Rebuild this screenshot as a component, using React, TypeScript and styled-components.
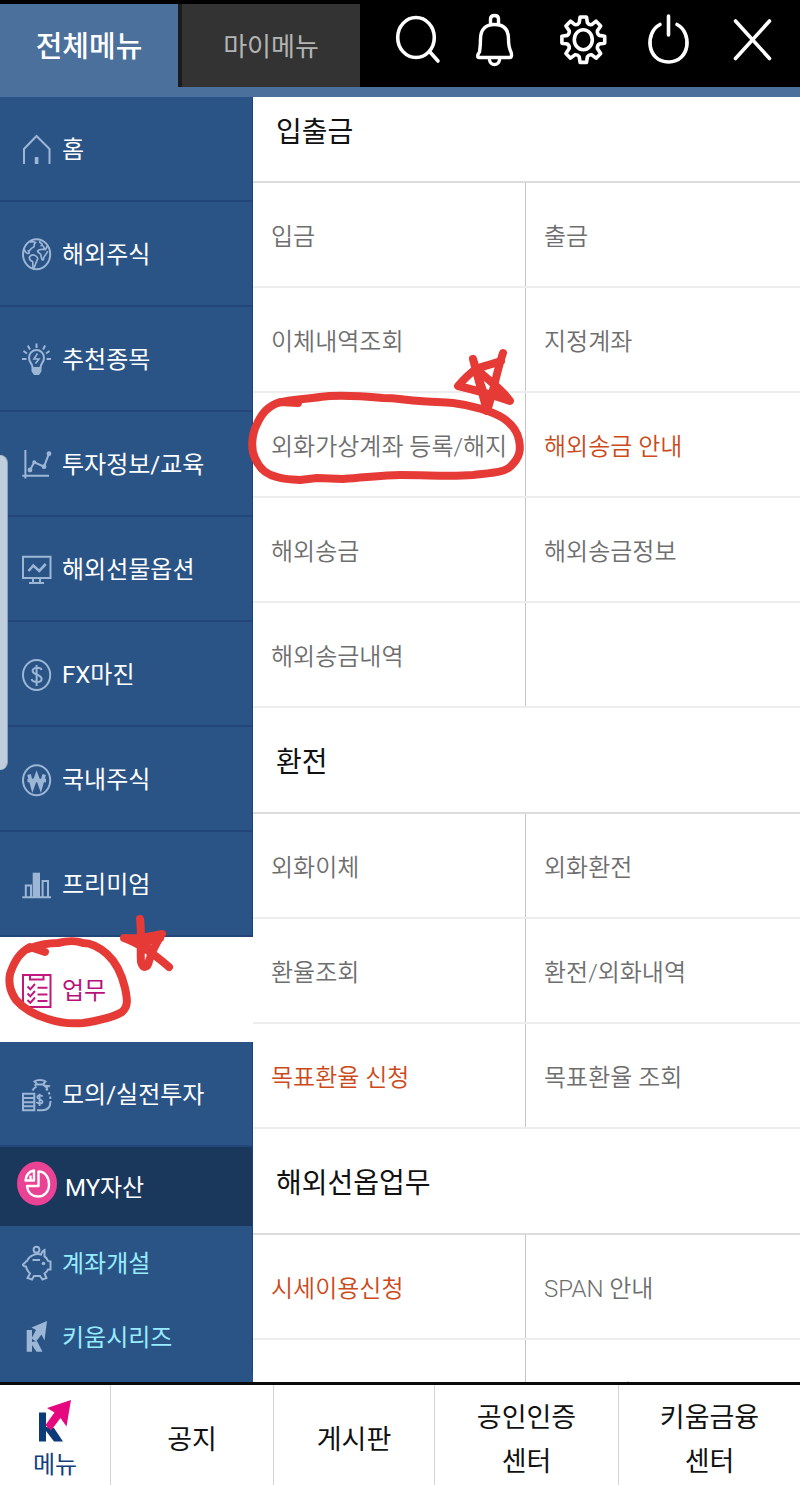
import React from "react";
import styled, { createGlobalStyle } from "styled-components";

const GlobalStyle = createGlobalStyle`
  *, *::before, *::after { box-sizing: border-box; }
  body {
    margin: 0;
    background: #fff;
    font-family: Roboto, "Noto Sans CJK KR", sans-serif;
  }
  a { color: inherit; text-decoration: none; }
  button { font: inherit; border: 0; padding: 0; background: none; cursor: pointer; }
`;

const Screen = styled.div`
  display: flex;
  flex-direction: column;
  height: 100vh;
  overflow: hidden;
`;

/* ---------- header ---------- */

const Header = styled.header`
  display: grid;
  grid-template-columns: 178fr 182fr 440fr;
  height: 97px;
  padding-top: 4px;
  background: #000;
  border-bottom: 10px solid #4b709c;
`;

const Tab = styled.button<{ $active?: boolean }>`
  padding-top: 2px;
  color: ${(p) => (p.$active ? "#fff" : "#b4b4b4")};
  background: ${(p) => (p.$active ? "#4b709c" : "#333")};
  border-left: ${(p) => (p.$active ? "0" : "4px solid #1c1c1c")};
  font-size: ${(p) => (p.$active ? "29px" : "26px")};
  font-weight: ${(p) => (p.$active ? 500 : 400)};
  line-height: 36px;
`;

const Actions = styled.div`
  display: grid;
  grid-template-columns: 76fr 82fr 88fr 84fr 84fr;
  align-items: start;
  padding: 4px 6px 0 20px;
`;

const Action = styled.button`
  display: flex;
  justify-content: center;
  color: #fff;
`;

const ActionIcon = styled.svg`
  width: 64px;
  height: 64px;
  fill: none;
  stroke: currentColor;
  stroke-width: 3.6;
  stroke-linecap: round;
  stroke-linejoin: round;
`;

/* ---------- main area ---------- */

const Main = styled.main`
  position: relative;
  display: grid;
  grid-template-columns: 253px 1fr;
  flex: 1;
  min-height: 0;
`;

const Sidebar = styled.nav`
  min-height: 0;
  overflow: hidden;
  background: #2b5486;
`;

type Tone = "normal" | "active" | "asset" | "extra";

const toneHeight: Record<Tone, string> = { normal: "105px", active: "105px", asset: "79px", extra: "74px" };
const toneColor: Record<Tone, string> = { normal: "#fff", active: "#b8107a", asset: "#fff", extra: "#98ecff" };
const toneFill: Record<Tone, string> = {
  normal: "transparent",
  active: "#fff",
  asset: "#1a375c",
  extra: "transparent",
};

const SideItem = styled.a<{ $tone: Tone }>`
  display: flex;
  align-items: center;
  gap: 8px;
  height: ${(p) => toneHeight[p.$tone]};
  padding-left: ${(p) => (p.$tone === "asset" ? "17px" : "20px")};
  border-bottom: ${(p) => (p.$tone === "normal" ? "2px solid #22457a" : "0")};
  border-right: ${(p) => (p.$tone === "active" ? "0" : "1px solid #1c437a")};
  color: ${(p) => toneColor[p.$tone]};
  background: ${(p) => toneFill[p.$tone]};
  font-size: 24px;
  line-height: 32px;
`;

const SideLabel = styled.span`
  padding-top: 2px;
`;

const SideIcon = styled.svg<{ $accent?: boolean }>`
  flex: none;
  width: 34px;
  height: 34px;
  overflow: visible;
  fill: none;
  color: ${(p) => (p.$accent ? "#c0187f" : "#9cb6d6")};
  stroke: currentColor;
  stroke-width: 2;
`;

const AssetIcon = styled.svg`
  flex: none;
  width: 40px;
  height: 52px;
  fill: none;
`;

const Content = styled.div`
  min-height: 0;
  overflow: hidden auto;
  scrollbar-width: none;
`;

const Section = styled.section`
  background: #fff;
`;

const SectionTitle = styled.h2<{ $first?: boolean }>`
  display: flex;
  align-items: center;
  height: ${(p) => (p.$first ? "86px" : "106px")};
  margin: 0;
  padding: ${(p) => (p.$first ? "0 23px 12px" : "6px 23px 0")};
  border-bottom: 2px solid #dcdcdc;
  color: #111;
  font-size: 28px;
  font-weight: 400;
  line-height: 36px;
`;

const Grid = styled.ul`
  display: grid;
  grid-template-columns: 273fr 274fr;
  margin: 0;
  padding: 0;
  list-style: none;
`;

const Cell = styled.li`
  display: flex;
  height: 105px;
  border-bottom: 2px solid #ededed;

  &:nth-child(odd) > * {
    border-right: 1px solid #c4c4c4;
  }
`;

const CellLink = styled.a<{ $accent?: boolean }>`
  display: flex;
  align-items: center;
  flex: 1;
  padding: 4px 0 0 18px;
  color: ${(p) => (p.$accent ? "#cc4a1a" : "#6e6e6e")};
  font-size: 24px;
  font-weight: 350;
  line-height: 32px;
  white-space: nowrap;
`;

const ScrollHandle = styled.div`
  position: absolute;
  left: 0;
  top: 358px;
  width: 8px;
  height: 315px;
  border-right: 1px solid #8fa3ba;
  border-radius: 0 8px 8px 0;
  background: #c0cddc;
`;

const Markup = styled.svg`
  position: absolute;
  left: 0;
  top: 0;
  width: 560px;
  height: 960px;
  pointer-events: none;
  fill: none;
  stroke: #e53a36;
  stroke-width: 8;
  stroke-linecap: round;
  stroke-linejoin: round;
`;

/* ---------- bottom bar ---------- */

const BottomBar = styled.nav`
  display: grid;
  grid-template-columns: 111fr 163fr 161fr 184fr 181fr;
  height: 103px;
  border-top: 3px solid #0a0a0a;
  background: #fff;
`;

const BottomLink = styled.a<{ $brand?: boolean }>`
  display: flex;
  flex-direction: column;
  align-items: center;
  justify-content: center;
  gap: ${(p) => (p.$brand ? "6px" : "0")};
  padding-top: 10px;
  border-right: 1px solid #d4d4d4;
  color: ${(p) => (p.$brand ? "#12407c" : "#111")};
  font-size: ${(p) => (p.$brand ? "24px" : "27px")};
  line-height: ${(p) => (p.$brand ? "32px" : "44px")};
  text-align: center;

  &:last-child { border-right: 0; }
`;

const BrandMark = styled.svg`
  width: 34px;
  height: 44px;
`;

/* ---------- drawings ---------- */

const DollarStrokes = () => (
  <path d="M5 -5 C4 -8 -4 -8 -4 -4 C-4 0 5 -1 5 4 C5 8 -4 8 -5 4 M0 -10 V11" />
);

const icons: Record<string, React.ReactNode> = {
  home: (
    <>
      <path d="M4 32 V17 L16.5 4 L29.5 17 V32" />
      <path strokeWidth="3.6" d="M16.6 25 V32" />
    </>
  ),
  globe: (
    <>
      <ellipse cx="16.6" cy="17.3" rx="13.6" ry="15" />
      <path
        strokeWidth="1.7"
        d="M9.5 4.5 C11 6 13.5 3.5 15.5 5.5 C12.5 7.5 16 9 13 10.5 C10.5 11 10.5 13.5 8.5 14 C10.5 16.5 7.5 17.5 5.5 15 L4 12 M20 4 C18.5 6.5 24 6 21.5 8.5 C25.5 9 22.5 11 25.5 12.5 L27.5 9 M25.5 12.5 C22 12.5 19.5 11.5 17.5 14 C18 17 21.5 15.5 21 19 C21.5 22 22.5 24 23.5 22.5 C23 18.5 27 18 27.5 14 M9.5 20 C11 17 14.5 17.5 16.5 19.5 C19.5 22.5 16.5 22 16.5 25 C15 27 15.5 29 13.5 31.5 C12 28.5 13.5 26 12.5 24.5 C10 23.5 9 22 9.5 20Z"
      />
    </>
  ),
  bulb: (
    <>
      <path d="M12.5 25.5 C12.5 21.5 9 20.5 9 15.5 A7.5 7.5 0 0 1 24 15.5 C24 20.5 20.5 21.5 20.5 25.5" />
      <path d="M12.5 26 H20.5 V29 L18.5 32 H14.5 L12.5 29Z" fill="currentColor" />
      <path strokeWidth="1.6" d="M17.500 11.500 L14 17 H19 L15.500 21.500" />
      <path d="M16.5 1.5 V6 M7.800 3.5 L10 7.5 M25.200 3.5 L23 7.5 M3.5 9 L7 11.5 M29.5 9 L26 11.5 M2 17 H6.5 M26.5 17 H31" />
    </>
  ),
  chart: (
    <>
      <path d="M5.4 3 V31.5 M2.3 28.7 H29" />
      <path d="M10 23 L14.3 15.3 L24 19.7 L29 6.7" />
      <g fill="currentColor" stroke="none">
        <circle cx="10" cy="23" r="2.4" />
        <circle cx="14.3" cy="15.3" r="2" />
        <circle cx="24" cy="19.7" r="2.4" />
        <circle cx="29" cy="6.7" r="2.4" />
      </g>
    </>
  ),
  monitor: (
    <>
      <path d="M3 4.8 H30.5 V26 H3Z M13 26 V30.5 M20 26 V30.5 M9 31 H24" />
      <path strokeWidth="2.6" d="M8.5 19 L13.3 13.5 L19.3 19 L25.7 12" />
    </>
  ),
  dollar: (
    <>
      <ellipse cx="16.6" cy="18" rx="13.6" ry="15" />
      <g transform="translate(16.6 18)">
        <DollarStrokes />
      </g>
    </>
  ),
  won: (
    <>
      <ellipse cx="16.6" cy="18.3" rx="13.6" ry="15" />
      <path strokeWidth="3.6" d="M9 12.5 L12.5 25 L16.6 13.5 L20.7 25 L24.2 12.5" />
      <path strokeWidth="3.6" d="M7.5 18.5 H26" />
    </>
  ),
  bars: (
    <>
      <path d="M2.3 30.2 H31 M5.8 30 V18.5 H11 V30 M22.6 30 V14 H28 V30" />
      <path fill="currentColor" stroke="none" d="M12.7 5.7 H20 V30 H12.7Z" />
    </>
  ),
  clipboard: (
    <>
      <path d="M3 2 H30.5 V34 H3Z M10 2 V6.5 H23.5 V2" />
      <path d="M7.5 13.5 L10.3 16.3 L15 11 M7.5 20.5 L10.3 23.3 L15 18 M7.5 27 L10.3 29.8 L15 24.5 M17.5 14.8 H27.5 M17.5 21.5 H27.5 M17.5 28 H27.5" />
    </>
  ),
  moneybag: (
    <>
      <path d="M3 16.8 H14.3 V33.3 H3Z M3 21 H14.3 M3 25.2 H14.3 M3 29.3 H14.3" />
      <path d="M14.5 8.5 L17 7 L14.5 4.5 C17 2.5 23 2.5 25.5 4.5 L23 7.5 H16.5 M12.5 13.5 C13.5 11.5 15 10.5 16.5 9.5 M23.5 8 C25.5 10 29 8.5 30 9.5 M24 8.5 L28 11.5" />
      <path strokeDasharray="2.5 2" d="M26 11.5 C30 16 30.5 20 30.5 24" />
      <path d="M30.5 24 C30.5 31 27 33.3 22 33.3 H17" />
      <g transform="translate(19.6 22.5) scale(0.58)" strokeWidth="3">
        <DollarStrokes />
      </g>
    </>
  ),
  piggy: (
    <>
      <circle cx="16.5" cy="3.7" r="2.9" />
      <path d="M21 8.5 C16 7 9 9.5 7 15 C5.5 15.5 5.5 16.5 3 18.5 C3 20 5 20.5 6 20.5 C6.5 23.5 8 25.5 10 27.5 L7.5 32 L12 33.5 L14 30 H20 L22.5 33.5 L26.5 32 L24.5 27.5 C26.5 26 27.5 25 28 23.5 H30.5 V15.5 L28 15 C27 12.5 25.5 11 24.5 10.5 L24.5 4 C22.5 5 21.5 6.5 21 8.5Z M12.5 14 H20" />
      <circle cx="23.5" cy="17.5" r="1.8" fill="currentColor" stroke="none" />
    </>
  ),
  series: (
    <g fill="currentColor" stroke="none">
      <path d="M6.700 10 H12 V22 L17 21 L22.500 31.700 H16.500 L12 25 V31.700 H6.700Z" />
      <path d="M27 1 L11.5 7.5 L16 10 L11.5 18.500 L16 21.5 L21.500 14.500 L24.5 20.5Z" />
    </g>
  ),
};

const sideItems: { label: string; icon: string; tone: Tone }[] = [
  { label: "홈", icon: "home", tone: "normal" },
  { label: "해외주식", icon: "globe", tone: "normal" },
  { label: "추천종목", icon: "bulb", tone: "normal" },
  { label: "투자정보/교육", icon: "chart", tone: "normal" },
  { label: "해외선물옵션", icon: "monitor", tone: "normal" },
  { label: "FX마진", icon: "dollar", tone: "normal" },
  { label: "국내주식", icon: "won", tone: "normal" },
  { label: "프리미엄", icon: "bars", tone: "normal" },
  { label: "업무", icon: "clipboard", tone: "active" },
  { label: "모의/실전투자", icon: "moneybag", tone: "normal" },
  { label: "MY자산", icon: "asset", tone: "asset" },
  { label: "계좌개설", icon: "piggy", tone: "extra" },
  { label: "키움시리즈", icon: "series", tone: "extra" },
];

type Entry = { label: string; accent?: boolean };

const sections: { title: string; entries: Entry[] }[] = [
  {
    title: "입출금",
    entries: [
      { label: "입금" },
      { label: "출금" },
      { label: "이체내역조회" },
      { label: "지정계좌" },
      { label: "외화가상계좌 등록/해지" },
      { label: "해외송금 안내", accent: true },
      { label: "해외송금" },
      { label: "해외송금정보" },
      { label: "해외송금내역" },
      { label: "" },
    ],
  },
  {
    title: "환전",
    entries: [
      { label: "외화이체" },
      { label: "외화환전" },
      { label: "환율조회" },
      { label: "환전/외화내역" },
      { label: "목표환율 신청", accent: true },
      { label: "목표환율 조회" },
    ],
  },
  {
    title: "해외선옵업무",
    entries: [
      { label: "시세이용신청", accent: true },
      { label: "SPAN 안내" },
      { label: "SPAN 위탁증거" },
      { label: "위험고지" },
    ],
  },
];

function gearPath(cx: number, cy: number) {
  const teeth = 8;
  const point = (r: number, angle: number) =>
    `${(cx + r * 0.94 * Math.cos(angle)).toFixed(1)} ${(cy + r * Math.sin(angle)).toFixed(1)}`;
  const parts: string[] = [];
  for (let i = 0; i < teeth; i++) {
    const a = (i * 2 * Math.PI) / teeth - Math.PI / 2;
    parts.push(
      `${point(17.5, a - 0.25)} L${point(23, a - 0.15)} L${point(23, a + 0.15)} L${point(17.5, a + 0.25)} Q${point(15.8, a + 0.39)}`
    );
  }
  return `M${parts.join(" ")} ${point(17.5, -Math.PI / 2 - 0.25)}Z`;
}

const actions: { label: string; drawing: React.ReactNode }[] = [
  {
    label: "검색",
    drawing: (
      <>
        <ellipse cx="30" cy="29.5" rx="18.3" ry="20" />
        <path d="M43.5 43.5 L52 53" />
      </>
    ),
  },
  {
    label: "알림",
    drawing: (
      <path
        strokeWidth="3.4"
        d="M25.5 16 V11 Q25.5 7.5 29.5 7.5 Q33.5 7.5 33.5 11 V16 M14.5 44 C15 40 15.5 38 15.5 31 C15.5 21 21 16.5 29.5 16.5 C38 16.5 43.5 21 43.5 31 C43.5 38 44 40 46 44 C47 47 46.5 49.5 45 49.5 H14 C12.5 49.5 12 47 14.5 44Z M24.5 52 Q25.5 56.5 29.5 56.5 Q33.5 56.5 34.5 52"
      />
    ),
  },
  {
    label: "설정",
    drawing: (
      <>
        <path d={gearPath(33.3, 31.7)} />
        <ellipse cx="33.3" cy="31.7" rx="9" ry="10" />
      </>
    ),
  },
  {
    label: "로그아웃",
    drawing: <path d="M32.5 8 V27 M24 16.5 C9 24 10 53.5 32.5 54 C55 53.5 56 24 41 16.5" />,
  },
  { label: "닫기", drawing: <path d="M15.5 13 L49.5 50.5 M49.5 13 L15.5 50.5" /> },
];

const bottomItems = [["공지"], ["게시판"], ["공인인증", "센터"], ["키움금융", "센터"]];

export default function App() {
  return (
    <Screen>
      <GlobalStyle />
      <Header>
        <Tab $active>전체메뉴</Tab>
        <Tab>마이메뉴</Tab>
        <Actions>
          {actions.map((a) => (
            <Action key={a.label} aria-label={a.label}>
              <ActionIcon viewBox="0 0 64 64">{a.drawing}</ActionIcon>
            </Action>
          ))}
        </Actions>
      </Header>

      <Main>
        <Sidebar>
          {sideItems.map((item) => (
            <SideItem key={item.label} href="#" $tone={item.tone}>
              {item.tone === "asset" ? (
                <AssetIcon viewBox="0 0 40 52">
                  <ellipse cx="20" cy="22.5" rx="20" ry="22" fill="#ea4395" />
                  <path
                    d="M21.5 10.5 C28 10.5 32 16 32 23.5 C32 31 27 35.5 21 35.5 C14.5 35.5 10.5 31 10 25 H21.5Z M17 9.5 V19.5 H8.5 C9 14 12 10.5 17 9.5Z M13.5 14.5 V19"
                    stroke="#fff"
                    strokeWidth="2.4"
                    strokeLinejoin="round"
                  />
                </AssetIcon>
              ) : (
                <SideIcon viewBox="0 0 34 34" $accent={item.tone === "active"}>
                  {icons[item.icon]}
                </SideIcon>
              )}
              <SideLabel>{item.label}</SideLabel>
            </SideItem>
          ))}
        </Sidebar>

        <Content>
          {sections.map((s, i) => (
            <Section key={s.title}>
              <SectionTitle $first={i === 0}>{s.title}</SectionTitle>
              <Grid>
                {s.entries.map((e, n) => (
                  <Cell key={n}>
                    {e.label && (
                      <CellLink href="#" $accent={e.accent}>
                        {e.label}
                      </CellLink>
                    )}
                  </Cell>
                ))}
              </Grid>
            </Section>
          ))}
        </Content>

        <ScrollHandle />
        <Markup viewBox="0 97 560 960" aria-hidden="true">
          <path d="M298 403 L280 402 C268 406 262 413 257 424 C251 436 251 450 255 458 C259 468 267 475 277 477 C286 480 292 479 300 480 L317 478 L343 479 C370 477 385 475 400 475 C430 475 450 477 473 475 C490 473 504 473 511 466 C520 457 521 450 519 440 C517 430 512 424 503 418 C492 411 470 405 453 403 C440 402 430 402 420 401 C405 400 395 398 383 398 C360 396 335 395 320 397 C310 399 290 399 278 403" />
          <path d="M473 359 C477 375 482 392 487 411 M503 353 C497 370 494 390 487 411 M501 361 C494 364 482 366 476 369 C469 374 464 379 458 386 C475 390 493 395 510 401 C502 389 490 382 478 370 M473 359 L481 385 L487 402" />
          <path d="M45 952 L30 947 C19 953 14 962 10 974 C8 985 11 993 16 1000 C24 1009 35 1015 48 1019 C60 1023 72 1024 83 1023 C96 1021 112 1018 122 1012 C129 1006 127 998 125 988 C122 975 117 963 107 954 C99 947 92 943 83 943 C75 940 66 941 58 943 C48 943 38 945 28 949" />
          <path d="M140 919 C142 935 140 950 141 962 C143 970 148 967 149 961 C152 951 157 942 162 934 C150 937 136 939 124 938 C138 943 153 953 169 967 M141 935 L150 952 M160 938 L146 942" />
        </Markup>
      </Main>

      <BottomBar>
        <BottomLink href="#" $brand>
          <BrandMark viewBox="0 0 34 44">
            <path fill="#0d3b7a" d="M1 13.5 H8 V28 L16 29 L25 42.5 H16 L8 32 V42.5 H1Z" />
            <path fill="#e5087f" d="M33 1 L9 9 L16.5 13.5 L7.5 26 L13 31.5 L22.5 19 L28.5 27.5Z" />
          </BrandMark>
          메뉴
        </BottomLink>
        {bottomItems.map((lines) => (
          <BottomLink href="#" key={lines[0]}>
            {lines.map((line, i) => (
              <span key={i}>{line}</span>
            ))}
          </BottomLink>
        ))}
      </BottomBar>
    </Screen>
  );
}
